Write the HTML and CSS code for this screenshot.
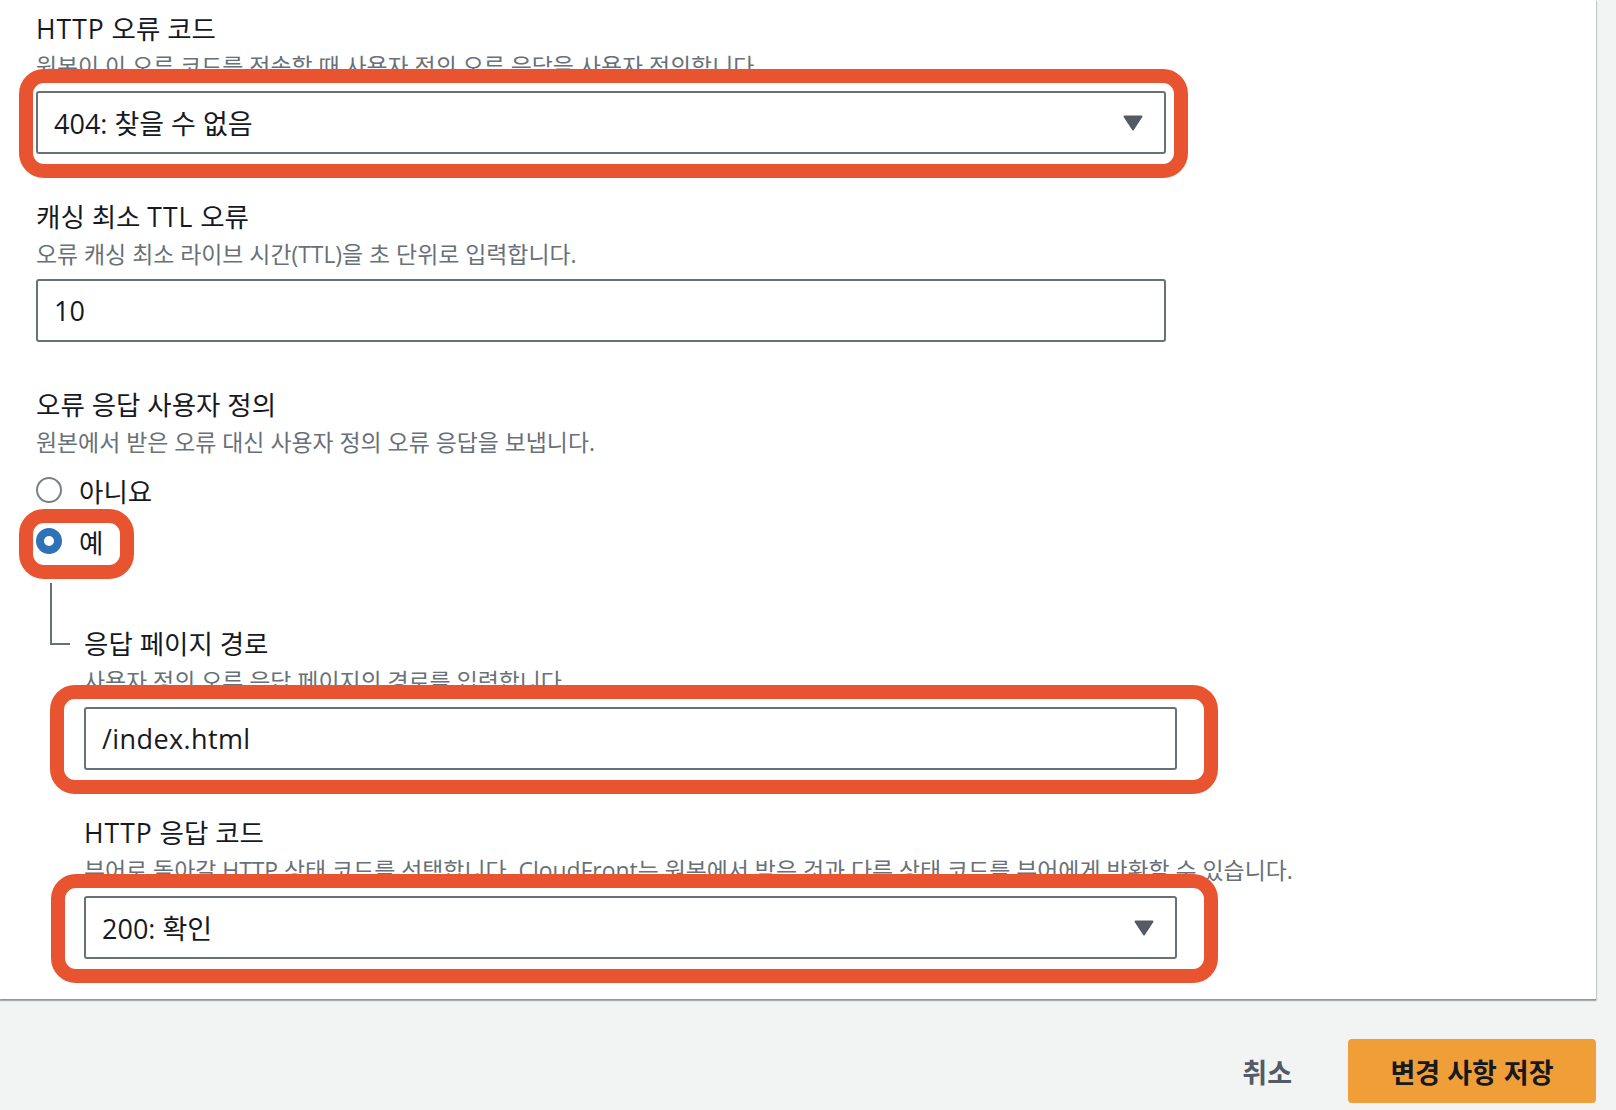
FILE: index.html
```html
<!DOCTYPE html>
<html lang="ko">
<head>
<meta charset="utf-8">
<title>오류 응답 편집</title>
<link rel="stylesheet" href="styles.css">
</head>
<body>
<div class="page">
  <section class="panel">
    <div class="field">
      <div class="label"><span class="en">HTTP</span> 오류 코드</div>
      <div class="desc">원본이 이 오류 코드를 전송할 때 사용자 정의 오류 응답을 사용자 정의합니다.</div>
      <div class="control">
        <div class="box select">
          <span class="value">404: 찾을 수 없음</span>
          <svg class="caret" width="20" height="16" viewBox="0 0 20 16"><path d="M1.5 1.5 H18.5 L10 14.5 Z" fill="#545b64" stroke="#545b64" stroke-width="2" stroke-linejoin="round"/></svg>
        </div>
        <span class="mark mark-a"></span>
      </div>
    </div>

    <div class="field">
      <div class="label">캐싱 최소 <span class="en">TTL</span> 오류</div>
      <div class="desc">오류 캐싱 최소 라이브 시간(TTL)을 초 단위로 입력합니다.</div>
      <div class="control">
        <div class="box input"><span class="value">10</span></div>
      </div>
    </div>

    <div class="field">
      <div class="label">오류 응답 사용자 정의</div>
      <div class="desc">원본에서 받은 오류 대신 사용자 정의 오류 응답을 보냅니다.</div>
      <div class="radios">
        <div class="radio"><span class="dot"></span><span>아니요</span></div>
        <div class="radio"><span class="dot on"></span><span>예</span><span class="mark mark-b"></span></div>
      </div>

      <div class="nested">
        <div class="connector"></div>
        <div class="nested-body">
          <div class="field">
            <div class="label">응답 페이지 경로</div>
            <div class="desc">사용자 정의 오류 응답 페이지의 경로를 입력합니다.</div>
            <div class="control">
              <div class="box input"><span class="value path">/index.html</span></div>
              <span class="mark mark-c"></span>
            </div>
          </div>
          <div class="field">
            <div class="label"><span class="en">HTTP</span> 응답 코드</div>
            <div class="desc">뷰어로 돌아갈 HTTP 상태 코드를 선택합니다. CloudFront는 원본에서 받은 것과 다른 상태 코드를 뷰어에게 반환할 수 있습니다.</div>
            <div class="control">
              <div class="box select">
                <span class="value">200: 확인</span>
                <svg class="caret" width="20" height="16" viewBox="0 0 20 16"><path d="M1.5 1.5 H18.5 L10 14.5 Z" fill="#545b64" stroke="#545b64" stroke-width="2" stroke-linejoin="round"/></svg>
              </div>
              <span class="mark mark-d"></span>
            </div>
          </div>
        </div>
      </div>
    </div>
  </section>

  <div class="footer">
    <button class="btn-link" type="button">취소</button>
    <button class="btn-primary" type="button">변경 사항 저장</button>
  </div>
</div>
</body>
</html>
```

FILE: styles.css
```css
* {
  box-sizing: border-box;
}

html,
body {
  margin: 0;
  padding: 0;
}

body {
  width: 1616px;
  height: 1110px;
  overflow: hidden;
  background: #f2f3f3;
  color: #16191f;
  font-family: "Open Sans", "Noto Sans CJK KR", sans-serif;
}

.page {
  padding-right: 20px;
}

.panel {
  background: #ffffff;
  padding: 11px 0 40px 36px;
  box-shadow: 0 2px 1px rgba(0, 28, 36, 0.3), 1px 1px 1px rgba(0, 28, 36, 0.15);
}

.field + .field {
  margin-top: 45px;
}

.label {
  font-size: 26.5px;
  line-height: 36px;
  white-space: nowrap;
}

.en {
  letter-spacing: 1px;
}

.desc {
  margin-top: 4px;
  font-size: 22.9px;
  line-height: 32px;
  color: #687078;
  white-space: nowrap;
}

.control {
  position: relative;
  width: 1130px;
  margin-top: 8px;
}

.nested .control {
  width: 1093px;
  margin-top: 9px;
}

.box {
  display: flex;
  align-items: center;
  height: 63px;
  padding-left: 16px;
  border: 2px solid #687078;
  border-radius: 3px;
  background: #ffffff;
  font-size: 27px;
  white-space: nowrap;
}

.select {
  justify-content: space-between;
  padding-right: 21px;
}

.value.path {
  letter-spacing: 0.4px;
}

.caret {
  display: block;
  flex: none;
}

.mark {
  position: absolute;
  border: 14px solid #e8542f;
  border-radius: 25px;
  pointer-events: none;
}

.mark-a {
  left: -17px;
  top: -22px;
  right: -22px;
  bottom: -24px;
}

.mark-b {
  left: -17px;
  top: -13px;
  right: -31px;
  bottom: -19px;
}

.mark-c {
  left: -34px;
  top: -22px;
  right: -41px;
  bottom: -24px;
}

.mark-d {
  left: -33px;
  top: -22px;
  right: -41px;
  bottom: -24px;
}

.radios {
  display: flex;
  flex-direction: column;
  align-items: flex-start;
  gap: 13px;
  margin-top: 12px;
}

.radio {
  position: relative;
  display: inline-flex;
  align-items: center;
  gap: 17px;
  height: 38px;
  font-size: 26.5px;
}

.dot {
  width: 26px;
  height: 26px;
  border-radius: 50%;
  border: 2px solid #7b8086;
  background: #ffffff;
  flex: none;
}

.dot.on {
  border: 8px solid #2f72b8;
}

.nested {
  display: flex;
  margin-top: 23px;
}

.connector {
  flex: none;
  width: 20px;
  height: 62px;
  margin-left: 14px;
  border-left: 2px solid #687078;
  border-bottom: 2px solid #687078;
}

.nested-body {
  margin-left: 14px;
  padding-top: 43px;
}

.footer {
  display: flex;
  justify-content: flex-end;
  align-items: center;
  gap: 56px;
  margin-top: 40px;
}

.btn-link,
.btn-primary {
  font-family: inherit;
  font-size: 27px;
  font-weight: 700;
  border: 0;
  cursor: pointer;
}

.btn-link {
  padding: 0;
  background: none;
  color: #545b64;
}

.btn-primary {
  width: 248px;
  height: 64px;
  border-radius: 4px;
  background: #f09e37;
  color: #16191f;
}
```
